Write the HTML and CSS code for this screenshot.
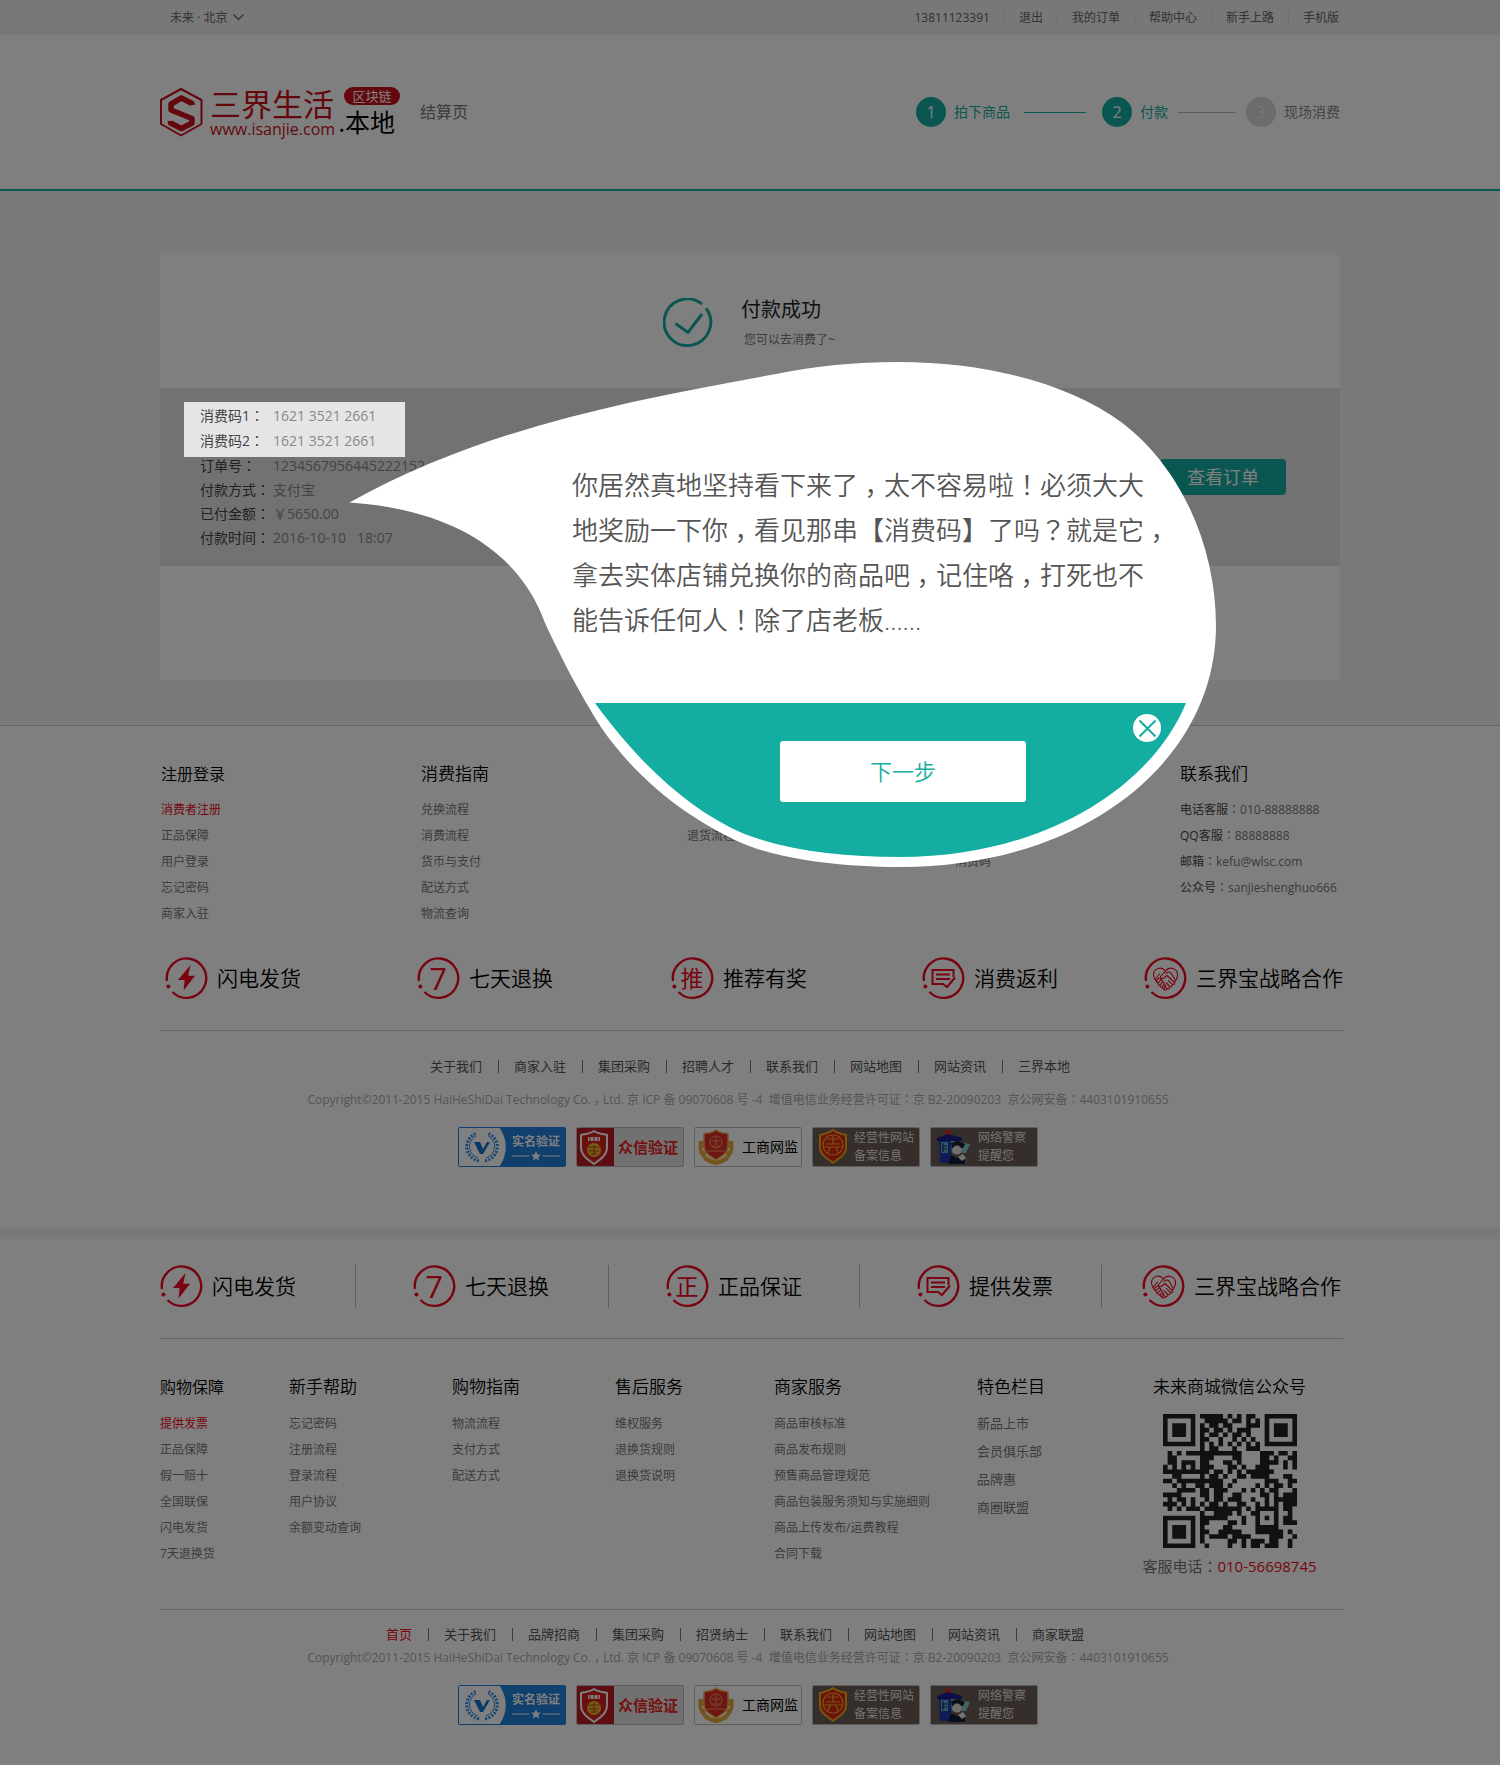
FILE: index.html
```html
<!DOCTYPE html>
<html lang="zh-CN">
<head>
<meta charset="utf-8">
<meta name="viewport" content="width=device-width, initial-scale=1">
<title>结算页</title>
<link rel="stylesheet" href="styles.css">
</head>
<body>

<svg class="sprite" aria-hidden="true">
  <symbol id="ring" viewBox="0 0 43 43">
    <path d="M7.5 35A19.7 19.7 0 1 0 2 24" fill="none" stroke="currentColor" stroke-width="2.4"/>
    <circle cx="3.4" cy="29.6" r="2" fill="currentColor"/>
  </symbol>
  <symbol id="bolt" viewBox="0 0 43 43">
    <path d="M25.5 8 13 23h6.6l-1 10.500L30 18.800h-6.800z" fill="currentColor"/>
  </symbol>
  <symbol id="note" viewBox="0 0 43 43">
    <g fill="none" stroke="currentColor" stroke-width="2">
      <path d="M20.500 27H10.500V13H31.500V20"/>
      <path d="M14 17.500H28M14 22H28"/>
      <path d="M20.500 26.500l4.500 3.500 8-9.500"/>
    </g>
  </symbol>
  <symbol id="hands" viewBox="0 0 43 43">
    <g fill="none" stroke="currentColor" stroke-width="1.100" stroke-linejoin="round" stroke-linecap="round">
      <path d="M21.500 14C18 9 9.500 11 9.500 18c0 3 1.500 5 3.500 7M21.500 14C25 9 33.500 11 33.500 18c0 3-1.500 5.500-3.500 8"/>
      <path d="M21.500 14l-5 5.500c-.5 2 2 2.500 3.500 1.500l3-2.500 7.500 7c1 1.500-1 3-2.300 1.700l-3.700-3.500"/>
      <path d="M28 27.500c.8 1.600-1 3-2.300 1.800L22.500 26M25.300 30c.3 1.700-1.300 2.600-2.500 1.500L20.500 29M22.500 32c-.5 1.300-2 1.300-3 .2"/>
      <path d="M13 23l2-1.800c1.200-.7 2.400.7 1.700 1.800l-2.400 2.600c-1.300.8-2.300-.8-1.300-2.600M16.800 23.300c1.200-.7 2.300.6 1.700 1.800l-2.700 3c-1.400.5-2.200-1-1.300-2.300M18.700 25.400c1.200-.5 2.100.8 1.500 1.900l-2.300 2.600c-1.200.6-2.200-.6-1.700-1.900M20.300 27.900c1.100-.3 1.800.8 1.300 1.800l-1.400 1.800c-1 .6-2-.4-1.700-1.600"/>
      <path d="M11.500 22l4-5M31.500 23.500l-4.500-7.500c-1.500-1.500-3.500-1.500-5 .5"/>
    </g>
  </symbol>
  <symbol id="laurel" viewBox="0 1 48 38">
    <path d="M0 0H40C49 12 49 28 40 40H0z" fill="#fff"/>
    <g fill="none" stroke="#2a8ae6" stroke-width="3" stroke-dasharray="2 1.500">
      <path d="M20 34C4 30 4 11 18 6M26 34C42 30 42 11 28 6"/>
    </g>
    <g fill="none" stroke="#2a8ae6" stroke-width="1">
      <path d="M19 31C8 27 8 14 17 9M27 31C38 27 38 14 29 9"/>
    </g>
    <path d="M15 15h6l3 7 4-7h3l-7 12h-3z" fill="#1272cf"/>
  </symbol>
  <symbol id="star" viewBox="0 0 48 10">
    <path d="M0 5H17M31 5H48" stroke="#fff"/>
    <path d="M24 0l1.400 3.500 3.600.2-2.800 2.200 1 3.600-3.200-2-3.200 2 1-3.600L19 3.700l3.600-.2z" fill="#fff"/>
  </symbol>
  <symbol id="shield-ebs" viewBox="0 0 37 38">
    <path d="M17 3C13 6 8 6 4 7v12c0 8 6 12 13 17 7-5 13-9 13-17V7c-4-1-9-1-13-4z" fill="#d8201e" stroke="#fff" stroke-width="2"/>
    <path d="M11 9h12v4H11z" fill="#fff"/>
    <path d="M13 9v4M17 9v4M21 9v4" stroke="#d8201e"/>
    <ellipse cx="17" cy="22" rx="7" ry="7" fill="#e8b82a"/>
    <path d="M11 19h12M12 23h10M14 26h6M17 17v10" stroke="#c04818" stroke-width="1.200"/>
  </symbol>
  <symbol id="emblem-gold" viewBox="0 0 36 36">
    <path d="M3 14l4-4v10l-5-3zM33 14l-4-4v10l5-3zM1 20l7 3-1 5zM35 20l-7 3 1 5zM4 27l8 3 6 2 6-2 8-3-3 5-7 3-4 1-4-1-7-3z" fill="#e6a83e"/>
    <path d="M3 12c-2 8 0 18 15 22C33 30 35 20 33 12" fill="none" stroke="#e6a83e" stroke-width="4"/>
    <path d="M18 1c-3 3-8 3-12 4v12c0 7 6 10 12 14 6-4 12-7 12-14V5c-4-1-9-1-12-4z" fill="#dc2c26" stroke="#f0b04c" stroke-width="1.500"/>
    <circle cx="18" cy="13" r="6" fill="none" stroke="#f09a68"/>
    <path d="M18 8v8M14 12h8M13 17h10M9 22h18" stroke="#f09a68"/>
  </symbol>
  <symbol id="shield-record" viewBox="0 0 30 36">
    <path d="M15 1C11 4 6 5 2 6v13c0 7 7 10 13 15 6-5 13-8 13-15V6C24 5 19 4 15 1z" fill="#dc2418" stroke="#f2ac18" stroke-width="2"/>
    <g fill="none" stroke="#f2ac18" stroke-width="1.200">
      <circle cx="15" cy="16" r="10"/>
      <path d="M15 7v8M9 10h12M8 15h14M6 18h18M10 24l2-6M20 24l-2-6"/>
    </g>
  </symbol>
  <symbol id="police" viewBox="0 0 36 36">
    <path d="M10 1l5 1-2 4H9z" fill="#f02020"/>
    <path d="M1 9L12 5l14 4v3H1z" fill="#1a1a90"/>
    <path d="M3 12h12v22H4z" fill="#2038b0"/>
    <path d="M5 13h7v11H5z" fill="#58b0c8"/>
    <path d="M7 14v9M6 17h5M6 20h5" stroke="#102040"/>
    <path d="M15 12l19 3-4 9H16z" fill="#88c8d0"/>
    <path d="M15 14l7-2 7 3-2 4H16z" fill="#102030"/>
    <circle cx="21" cy="21" r="4.500" fill="#e8dcd0"/>
    <path d="M12 35l3-9 6 3 7-3 1 9z" fill="#101c38"/>
    <path d="M22 28l5-3 3 4-4 3z" fill="#e8e8e8"/>
  </symbol>
</svg>

<div class="topbar">
  <div class="wrap topbar__row">
    <button class="city" type="button">未来 · 北京
      <svg width="11" height="7" viewBox="0 0 11 7" aria-hidden="true"><path d="M.5.500l5 5 5-5" fill="none" stroke="currentColor" stroke-width="1.300"/></svg>
    </button>
    <ul class="topbar__links">
      <li><a href="#">13811123391</a></li>
      <li><a href="#">退出</a></li>
      <li><a href="#">我的订单</a></li>
      <li><a href="#">帮助中心</a></li>
      <li><a href="#">新手上路</a></li>
      <li><a href="#">手机版</a></li>
    </ul>
  </div>
</div>

<header class="header">
  <div class="wrap header__row">
    <a class="logo" href="#">
      <svg width="43" height="50" viewBox="0 0 43 50" aria-hidden="true">
        <path d="M21 2l20.500 11v24L21 48.500 1 37V13z" fill="none" stroke="#c8101c" stroke-width="2" stroke-linejoin="round"/>
        <path d="M32 18V16.500L21.500 11 11 17v6l21 8.500V36l-10.500 5.500L10.500 36v-2" fill="none" stroke="#c8101c" stroke-width="5.500" stroke-linejoin="round"/>
      </svg>
      <span class="logo__main">
        <span class="logo__name">三界生活</span>
        <span class="logo__url">www.isanjie.com</span>
      </span>
      <span class="logo__side">
        <span class="logo__tag">区块链</span>
        <span class="logo__local">.本地</span>
      </span>
    </a>
    <h1 class="page-title">结算页</h1>
    <ol class="steps">
      <li class="step step--done"><span class="step__no">1</span>拍下商品</li>
      <li class="step-line step-line--done" aria-hidden="true"></li>
      <li class="step step--done"><span class="step__no">2</span>付款</li>
      <li class="step-line" aria-hidden="true"></li>
      <li class="step"><span class="step__no">3</span>现场消费</li>
    </ol>
  </div>
</header>

<main class="main">
  <div class="wrap card">
    <section class="success">
      <svg width="50" height="50" viewBox="0 0 50 50" aria-hidden="true">
        <g fill="none" stroke="#14ada1" stroke-width="3">
          <path d="M38 5.300A23.300 23.300 0 1 0 43.800 11.300" stroke-linecap="round"/>
          <path d="M12.500 25.500L25 34.500 39 16"/>
        </g>
      </svg>
      <div>
        <h2 class="success__title">付款成功</h2>
        <p class="success__note">您可以去消费了~</p>
      </div>
    </section>

    <section class="order">
      <div class="order__info">
        <dl class="facts facts--codes">
          <dt>消费码1<span class="mid" lang="zh-TW">：</span></dt><dd>1621 3521 2661</dd>
          <dt>消费码2<span class="mid" lang="zh-TW">：</span></dt><dd>1621 3521 2661</dd>
        </dl>
        <dl class="facts">
          <dt>订单号<span class="mid" lang="zh-TW">：</span></dt><dd>1234567956445222152</dd>
          <dt>付款方式<span class="mid" lang="zh-TW">：</span></dt><dd>支付宝</dd>
          <dt>已付金额<span class="mid" lang="zh-TW">：</span></dt><dd>￥5650.00</dd>
          <dt>付款时间<span class="mid" lang="zh-TW">：</span></dt><dd>2016-10-10 &nbsp; 18:07</dd>
        </dl>
      </div>
      <button class="btn-order" type="button">查看订单</button>
    </section>

    <div class="bubble" role="dialog" aria-label="消费码">
      <svg class="bubble__shape" viewBox="349 362 868 506" aria-hidden="true">
        <path fill="#fff" d="M349.500 502.500C480 430 620 402 776 374C815 366 855 362 898 362C985 362 1068 383 1121 422C1180 466 1216 545 1216 626C1216 760 1085 867 900 867C830 867 770 857 735 840C680 813 640 780 605 733C585 703 562 660 545 623C522 558 460 510 349.500 502.500z"/>
        <path fill="#14ada1" d="M595 703H1186C1150 790 1040 857 900 857C840 857 785 850 742 833C690 810 640 765 595 703z"/>
      </svg>
      <p class="bubble__text">你居然真地坚持看下来了<span class="comma">，</span>太不容易啦<span class="mid" lang="zh-TW">！</span>必须大大<br>地奖励一下你<span class="comma">，</span>看见那串【消费码】了吗<span class="mid" lang="zh-TW">？</span>就是它<span class="comma">，</span><br>拿去实体店铺兑换你的商品吧<span class="comma">，</span>记住咯<span class="comma">，</span>打死也不<br>能告诉任何人<span class="mid" lang="zh-TW">！</span>除了店老板......</p>
      <button class="bubble__next" type="button">下一步</button>
      <button class="bubble__close" type="button" aria-label="关闭">
        <svg width="28" height="28" viewBox="0 0 28 28"><circle cx="14" cy="14" r="14" fill="#fff"/><path d="M6.500 6.500l16 16M22.500 6.500l-16 16" stroke="#14ada1" stroke-width="2"/></svg>
      </button>
    </div>
  </div>
</main>

<footer class="foot foot--local">
  <div class="wrap">
    <div class="cols cols--local">
      <div>
        <h3 class="lead">注册登录</h3>
        <ul class="links">
          <li><a class="hot" href="#">消费者注册</a></li>
          <li><a href="#">正品保障</a></li>
          <li><a href="#">用户登录</a></li>
          <li><a href="#">忘记密码</a></li>
          <li><a href="#">商家入驻</a></li>
        </ul>
      </div>
      <div>
        <h3>消费指南</h3>
        <ul class="links">
          <li><a href="#">兑换流程</a></li>
          <li><a href="#">消费流程</a></li>
          <li><a href="#">货币与支付</a></li>
          <li><a href="#">配送方式</a></li>
          <li><a href="#">物流查询</a></li>
        </ul>
      </div>
      <ul class="links links--second"><li><a href="#">退货流程</a></li></ul>
      <ul class="links links--third"><li><a href="#">消费码</a></li></ul>
      <div>
        <h3>联系我们</h3>
        <ul class="links links--contact">
          <li><b>电话客服</b><span class="mid" lang="zh-TW">：</span>010-88888888</li>
          <li><b>QQ客服</b><span class="mid" lang="zh-TW">：</span>88888888</li>
          <li><b>邮箱</b><span class="mid" lang="zh-TW">：</span>kefu@wlsc.com</li>
          <li><b>公众号</b><span class="mid" lang="zh-TW">：</span>sanjieshenghuo666</li>
        </ul>
      </div>
    </div>

    <ul class="perks perks--local">
      <li><svg class="perk"><use href="#ring"/><use href="#bolt"/></svg>闪电发货</li>
      <li><svg class="perk"><use href="#ring"/><text x="21" y="33" class="perk__seven">7</text></svg>七天退换</li>
      <li><svg class="perk"><use href="#ring"/><text x="21" y="30" class="perk__word">推</text></svg>推荐有奖</li>
      <li><svg class="perk"><use href="#ring"/><use href="#note"/></svg>消费返利</li>
      <li><svg class="perk"><use href="#ring"/><use href="#hands"/></svg>三界宝战略合作</li>
    </ul>

    <hr class="rule">

    <ul class="nav">
      <li><a href="#">关于我们</a></li>
      <li><a href="#">商家入驻</a></li>
      <li><a href="#">集团采购</a></li>
      <li><a href="#">招聘人才</a></li>
      <li><a href="#">联系我们</a></li>
      <li><a href="#">网站地图</a></li>
      <li><a href="#">网站资讯</a></li>
      <li><a href="#">三界本地</a></li>
    </ul>
    <p class="copy">Copyright©2011-2015 HaiHeShiDai Technology Co.<span class="comma">，</span>Ltd. 京 ICP 备 09070608 号 -4 &nbsp;增值电信业务经营许可证<span class="mid" lang="zh-TW">：</span>京 B2-20090203 &nbsp;京公网安备<span class="mid" lang="zh-TW">：</span>4403101910655</p>
    <ul class="badges">
      <li class="badge badge--real"><svg width="48" height="38"><use href="#laurel"/></svg><span>实名验证<svg width="48" height="10"><use href="#star"/></svg></span></li>
      <li class="badge badge--trust"><svg width="37" height="38"><use href="#shield-ebs"/></svg><span>众信验证</span></li>
      <li class="badge badge--trade"><svg width="36" height="36"><use href="#emblem-gold"/></svg><span>工商网监</span></li>
      <li class="badge badge--dark"><svg width="30" height="36"><use href="#shield-record"/></svg><span>经营性网站<br>备案信息</span></li>
      <li class="badge badge--dark"><svg width="36" height="36"><use href="#police"/></svg><span>网络警察<br>提醒您</span></li>
    </ul>
  </div>
</footer>

<footer class="foot foot--mall">
  <div class="wrap">
    <ul class="perks perks--mall">
      <li><svg class="perk"><use href="#ring"/><use href="#bolt"/></svg>闪电发货</li>
      <li><svg class="perk"><use href="#ring"/><text x="21" y="33" class="perk__seven">7</text></svg>七天退换</li>
      <li><svg class="perk"><use href="#ring"/><text x="21" y="30" class="perk__word">正</text></svg>正品保证</li>
      <li><svg class="perk"><use href="#ring"/><use href="#note"/></svg>提供发票</li>
      <li><svg class="perk"><use href="#ring"/><use href="#hands"/></svg>三界宝战略合作</li>
    </ul>

    <hr class="rule">

    <div class="cols cols--mall">
      <div>
        <h3 class="lead">购物保障</h3>
        <ul class="links">
          <li><a class="hot" href="#">提供发票</a></li>
          <li><a href="#">正品保障</a></li>
          <li><a href="#">假一赔十</a></li>
          <li><a href="#">全国联保</a></li>
          <li><a href="#">闪电发货</a></li>
          <li><a href="#">7天退换货</a></li>
        </ul>
      </div>
      <div>
        <h3>新手帮助</h3>
        <ul class="links">
          <li><a href="#">忘记密码</a></li>
          <li><a href="#">注册流程</a></li>
          <li><a href="#">登录流程</a></li>
          <li><a href="#">用户协议</a></li>
          <li><a href="#">余额变动查询</a></li>
        </ul>
      </div>
      <div>
        <h3>购物指南</h3>
        <ul class="links">
          <li><a href="#">物流流程</a></li>
          <li><a href="#">支付方式</a></li>
          <li><a href="#">配送方式</a></li>
        </ul>
      </div>
      <div>
        <h3>售后服务</h3>
        <ul class="links">
          <li><a href="#">维权服务</a></li>
          <li><a href="#">退换货规则</a></li>
          <li><a href="#">退换货说明</a></li>
        </ul>
      </div>
      <div>
        <h3>商家服务</h3>
        <ul class="links">
          <li><a href="#">商品审核标准</a></li>
          <li><a href="#">商品发布规则</a></li>
          <li><a href="#">预售商品管理规范</a></li>
          <li><a href="#">商品包装服务须知与实施细则</a></li>
          <li><a href="#">商品上传发布/运费教程</a></li>
          <li><a href="#">合同下载</a></li>
        </ul>
      </div>
      <div>
        <h3>特色栏目</h3>
        <ul class="links links--loose">
          <li><a href="#">新品上市</a></li>
          <li><a href="#">会员俱乐部</a></li>
          <li><a href="#">品牌惠</a></li>
          <li><a href="#">商圈联盟</a></li>
        </ul>
      </div>
      <div class="wechat">
        <h3>未来商城微信公众号</h3>
        <svg class="qr" viewBox="0 0 29 29" role="img" aria-label="微信二维码"><path id="qr-modules" fill="#222"/></svg>
        <p class="hotline">客服电话<span class="mid" lang="zh-TW">：</span><a class="hot" href="#">010-56698745</a></p>
      </div>
    </div>

    <hr class="rule">

    <ul class="nav nav--mall">
      <li><a class="hot" href="#">首页</a></li>
      <li><a href="#">关于我们</a></li>
      <li><a href="#">品牌招商</a></li>
      <li><a href="#">集团采购</a></li>
      <li><a href="#">招贤纳士</a></li>
      <li><a href="#">联系我们</a></li>
      <li><a href="#">网站地图</a></li>
      <li><a href="#">网站资讯</a></li>
      <li><a href="#">商家联盟</a></li>
    </ul>
    <p class="copy">Copyright©2011-2015 HaiHeShiDai Technology Co.<span class="comma">，</span>Ltd. 京 ICP 备 09070608 号 -4 &nbsp;增值电信业务经营许可证<span class="mid" lang="zh-TW">：</span>京 B2-20090203 &nbsp;京公网安备<span class="mid" lang="zh-TW">：</span>4403101910655</p>
    <ul class="badges">
      <li class="badge badge--real"><svg width="48" height="38"><use href="#laurel"/></svg><span>实名验证<svg width="48" height="10"><use href="#star"/></svg></span></li>
      <li class="badge badge--trust"><svg width="37" height="38"><use href="#shield-ebs"/></svg><span>众信验证</span></li>
      <li class="badge badge--trade"><svg width="36" height="36"><use href="#emblem-gold"/></svg><span>工商网监</span></li>
      <li class="badge badge--dark"><svg width="30" height="36"><use href="#shield-record"/></svg><span>经营性网站<br>备案信息</span></li>
      <li class="badge badge--dark"><svg width="36" height="36"><use href="#police"/></svg><span>网络警察<br>提醒您</span></li>
    </ul>
  </div>
</footer>

<div class="mask"></div>
<script src="qr.js"></script>
</body>
</html>
```
FILE: styles.css
```css
:root {
  --teal: #14ada1;
  --red: #f00822;
  --logo-red: #c8101c;
  --grey: #f5f5f5;
}

* { box-sizing: border-box; }

body {
  position: relative;
  margin: 0;
  background: #fff;
  color: #777;
  font: 400 12px/20px "Open Sans", "Noto Sans CJK SC", sans-serif;
}

h1, h2, h3, p, ul, ol, dl, dd { margin: 0; padding: 0; font-weight: inherit; }
ul, ol { list-style: none; }
a { color: inherit; text-decoration: none; }
button { border: 0; padding: 0; background: none; color: inherit; font: inherit; cursor: pointer; }
svg { display: block; flex: none; }

.sprite { position: absolute; width: 0; height: 0; }
.wrap { max-width: 1180px; margin: 0 auto; }
.hot { color: var(--red); }

/* Punctuation centred in its cell */
.mid { font-family: "Noto Sans CJK TC", sans-serif; line-height: 1; }
.comma { display: inline-block; width: 1em; font-feature-settings: "halt"; text-align: center; }

/* Dims the page; the codes and the bubble sit above it */
.mask { position: absolute; inset: 0; z-index: 10; background: rgba(0, 0, 0, .5); }

/* Top bar */
.topbar { background: #f0f0f0; color: #666; }
.topbar__row { display: flex; justify-content: space-between; align-items: center; height: 35px; padding: 0 1px 0 10px; }
.city { display: flex; align-items: center; gap: 6px; }
.topbar__links { display: flex; }
.topbar__links li { display: flex; align-items: center; }
.topbar__links li + li::before { content: ""; width: 1px; height: 12px; margin: 0 14px; background: #ddd; }

/* Header */
.header { border-bottom: 2px solid var(--teal); }
.header__row { display: flex; align-items: center; padding: 52px 0; }
.logo { display: flex; height: 50px; color: var(--logo-red); white-space: nowrap; }
.logo__main { display: flex; flex-direction: column; width: 126px; margin-left: 7px; }
.logo__name { font-size: 31px; line-height: 34px; }
.logo__url { font-size: 16px; line-height: 16px; }
.logo__side { display: flex; flex-direction: column; align-items: flex-end; width: 64px; }
.logo__tag { width: 56px; border-radius: 9px; background: var(--logo-red); color: #fff; font-size: 13px; line-height: 18px; text-align: center; }
.logo__local { padding-right: 5px; color: #000; font-size: 25px; line-height: 34px; }
.page-title { margin-left: 20px; font-size: 16px; }
.steps { display: flex; align-items: center; margin-left: auto; font-size: 14px; }
.step { display: flex; align-items: center; gap: 8px; color: #888; }
.step__no { width: 30px; border-radius: 50%; background: #d9d9d9; color: #eee; font-size: 16px; line-height: 30px; text-align: center; }
.step--done { color: var(--teal); }
.step--done .step__no { background: var(--teal); color: #fff; }
.step-line { width: 58px; height: 1px; margin: 0 10px; background: #bbb; }
.step-line--done { width: 62px; margin: 0 16px 0 14px; background: var(--teal); }

/* Result card */
.main { padding: 64px 0 45px; background: var(--grey); }
.card { position: relative; padding-bottom: 114px; background: #fff; }
.success { display: flex; justify-content: center; align-items: center; gap: 28px; padding: 40px 2px 38px 0; }
.success__title { color: #222; font-size: 20px; line-height: 30px; }
.success__note { margin: 5px 0 0 3px; }
.order { display: flex; justify-content: space-between; align-items: center; padding: 14px 54px 16px 24px; background: #e5e5e5; }
.facts { display: grid; grid-template-columns: 73px 1fr; margin-top: -3px; padding: 0 16px; font-size: 14px; line-height: 24px; }
.facts dt { color: #444; white-space: nowrap; }
.facts dd { color: #888; }
.facts--codes { position: relative; z-index: 11; width: 221px; margin: 0; padding: 1px 16px 4px; background: #e5e5e5; line-height: 25px; }
.btn-order { width: 126px; margin-top: 2px; border-radius: 4px; background: var(--teal); color: #fff; font-size: 18px; line-height: 36px; }

/* Guide bubble */
.bubble { position: absolute; z-index: 12; top: 107px; left: 189px; width: 868px; height: 506px; padding: 101px 0 0 223px; font-weight: 350; }
.bubble__shape { position: absolute; inset: 0; }
.bubble__text { position: relative; color: #555; font-size: 26px; line-height: 45px; white-space: nowrap; }
.bubble__next { position: relative; width: 246px; margin: 98px 0 0 208px; border-radius: 3px; background: #fff; color: var(--teal); font-size: 22px; line-height: 61px; }
.bubble__close { position: absolute; top: 352px; left: 784px; }

/* Footers */
.foot--local { border-top: 1px solid #ccc; border-bottom: 12px solid #f2f2f2; padding: 36px 0 60px; }
.foot--mall { padding: 26px 0 40px; }
.cols { display: grid; }
.cols h3 { margin-bottom: 10px; color: #000; font-size: 17px; font-weight: 350; line-height: 24px; white-space: nowrap; }
.cols h3.lead { font-size: 16px; }
.cols--local { grid-template-columns: 260px 266px 268px 225px 1fr; padding-left: 1px; }
.cols--mall { grid-template-columns: 129px 163px 163px 159px 203px 165px 1fr; padding-top: 36px; }
.links { padding-top: 1px; line-height: 26px; white-space: nowrap; }
.cols--mall .links { padding-top: 2px; }
.links--second { padding-top: 61px; }
.links--third { padding-top: 87px; }
.links--contact b { color: #444; font-weight: 400; }
.cols--mall .links--loose { padding-top: 0; font-size: 13px; line-height: 28px; }

.perks { display: grid; color: #000; font-size: 21px; font-weight: 350; line-height: 43px; white-space: nowrap; }
.perks li { display: flex; gap: 9px; }
.perks--local { grid-template-columns: 252px 254px 251px 222px 1fr; margin: 30px 0; padding-left: 5px; }
.perks--mall { grid-template-columns: 196px 253px 251px 242px 1fr; margin-bottom: 30px; }
.perks--mall li { padding-left: 57px; border-right: 1px solid #bbb; }
.perks--mall li:first-child { padding-left: 0; }
.perks--mall li:last-child { padding-left: 40px; border: 0; }
.perk { width: 43px; height: 43px; color: var(--red); }
.perk text { fill: currentColor; text-anchor: middle; }
.perk__seven { font-size: 31px; font-weight: 400; }
.perk__word { font-size: 23px; font-weight: 400; }

.rule { height: 1px; margin: 0 -3px 0 0; border: 0; background: #ccc; }

.nav { display: flex; justify-content: center; margin-top: 25px; color: #555; font-size: 13px; }
.nav li { display: flex; align-items: center; }
.nav li + li::before { content: ""; width: 1px; height: 13px; margin: 0 15px 0 16px; background: #777; }
.nav--mall { margin-top: 14px; padding-right: 30px; }
.copy { margin: 14px 24px 17px 0; color: #aaa; text-align: center; }
.nav--mall + .copy { margin-top: 4px; }

.wechat { display: flex; flex-direction: column; align-items: center; width: 175px; }
.wechat h3 { margin-bottom: 15px; }
.qr { width: 134px; height: 134px; }
.hotline { margin: 6px 0 31px; font-size: 15px; line-height: 24px; white-space: nowrap; }

/* Certification badges */
.badges { display: flex; justify-content: center; gap: 10px; padding-right: 4px; }
.badge { display: flex; align-items: center; width: 108px; height: 40px; border: 1px solid #bbb; border-radius: 2px; white-space: nowrap; }
.badge--real { gap: 5px; border-color: #1e80dc; background: #1e80dc; color: #fff; font-weight: 700; line-height: 18px; }
.badge--trust { gap: 4px; background: linear-gradient(90deg, #b81c24 37px, #e2e2e2 37px); color: #e8201c; font-size: 15px; font-weight: 700; }
.badge--trade { gap: 8px; padding-left: 3px; color: #000; font-size: 14px; }
.badge--dark { gap: 6px; padding-left: 5px; background: #6a5c54; color: #eee; font-weight: 350; line-height: 18px; }
```
FILE: qr.js
```js
// Module rows of the WeChat code, one string per row.
const rows = [
  "11111110111110101011001111111",
  "10000010011111011010101000001",
  "10111010101101100011101011101",
  "10111010110110101110001011101",
  "10111010101101011010001011101",
  "10000010110010010101001000001",
  "11111110101010101010101111111",
  "00000000101100010011100000000",
  "01010111111111111000011101101",
  "01100000111000011000011010011",
  "01101110110001101000011110101",
  "10101010111000110100111000101",
  "11111111110110101011111100000",
  "00110000101101001101111000110",
  "11011111111110010000001110011",
  "00101001101110100000101011010",
  "00011110110111000101010110001",
  "11110000110110011000011010111",
  "01011010010110111001001011111",
  "11101010101101001100101010111",
  "01010111011111111010111110110",
  "00000000100111101001100010010",
  "11111110111111000100101010110",
  "10000010110000110100100010111",
  "10111010100001100000111110000",
  "10111010110011111000111111010",
  "10111010101111011110000111001",
  "10000010100000110101110110010",
  "11111110010000100101101110010"
];

let d = "";
rows.forEach((row, y) => {
  for (const run of row.matchAll(/1+/g)) {
    const w = run[0].length;
    d += `M${run.index} ${y}h${w}v1h-${w}z`;
  }
});
document.getElementById("qr-modules").setAttribute("d", d);
```
